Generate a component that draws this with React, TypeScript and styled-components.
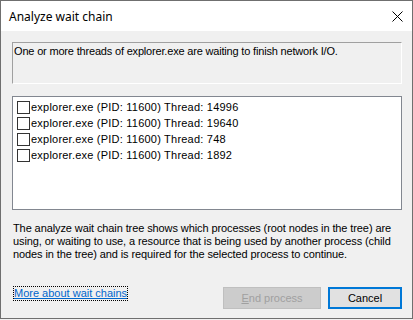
import React from "react";
import styled, { createGlobalStyle } from "styled-components";

const Global = createGlobalStyle`
  html, body { margin: 0; padding: 0; background: #f0f0f0; }
  body { font-family: "Liberation Sans", Arial, sans-serif; }
`;

const Window = styled.div`
  box-sizing: border-box;
  width: 413px;
  height: 319px;
  border: 1px solid #6f6f6f;
  background: #f0f0f0;
  display: flex;
  flex-direction: column;
`;

const TitleBar = styled.div`
  height: 30px;
  background: #ffffff;
  display: flex;
  align-items: center;
  justify-content: space-between;
  padding: 0 0 0 8px;
  flex-shrink: 0;
`;

const Title = styled.div`
  font-family: "Noto Sans", "Open Sans", sans-serif;
  font-size: 12px;
  color: #000;
  margin-top: 1px;
`;

const CloseBtn = styled.div`
  width: 30px;
  height: 30px;
  display: flex;
  align-items: center;
  justify-content: center;
`;

const Body = styled.div`
  flex: 1;
  display: flex;
  flex-direction: column;
  padding: 11px 10px 0 11px;
  font-size: 11px;
  color: #000;
`;

const Message = styled.div`
  box-sizing: border-box;
  height: 42px;
  border-top: 1px solid #a0a0a0;
  border-left: 1px solid #a0a0a0;
  border-right: 1px solid #ffffff;
  border-bottom: 1px solid #ffffff;
  padding: 2px 0 0 1px;
  line-height: 13px;
  letter-spacing: -0.18px;
`;

const List = styled.div`
  box-sizing: border-box;
  margin-top: 12px;
  height: 114px;
  background: #fff;
  border: 1px solid #828790;
  padding: 2px 0 0 4px;
  display: flex;
  flex-direction: column;
`;

const Row = styled.div`
  height: 16px;
  display: flex;
  align-items: center;
  letter-spacing: 0.22px;
`;

const Box = styled.span`
  box-sizing: border-box;
  width: 13px;
  height: 13px;
  border: 1px solid #333333;
  background: #fff;
  margin-right: 1px;
  flex-shrink: 0;
`;

const Description = styled.div`
  margin-top: 12px;
  line-height: 13px;
  padding-left: 1px;
  letter-spacing: -0.1px;
`;

const Footer = styled.div`
  margin-top: 26px;
  display: flex;
  align-items: flex-start;
`;

const Link = styled.a`
  color: #0066cc;
  text-decoration: underline;
  outline: 1px dotted #000;
  outline-offset: 0px;
  line-height: 13px;
  margin: 0 0 0 2px;
  cursor: pointer;
`;

const Spacer = styled.div`
  flex: 1;
`;

const Button = styled.button<{ $primary?: boolean; $w: number }>`
  box-sizing: border-box;
  width: ${(p) => p.$w}px;
  height: 22px;
  font-family: "Liberation Sans", Arial, sans-serif;
  font-size: 11px;
  padding: 0;
  margin-left: ${(p) => (p.$primary ? 7 : 0)}px;
  background: ${(p) => (p.$primary ? "#e1e1e1" : "#cccccc")};
  color: ${(p) => (p.$primary ? "#000" : "#a0a0a0")};
  border: ${(p) => (p.$primary ? "2px solid #0078d7" : "1px solid #bfbfbf")};
`;

const U = styled.span`
  text-decoration: underline;
`;

const rows = ["14996", "19640", "748", "1892"];

export default function App() {
  return (
    <>
      <Global />
      <Window>
        <TitleBar>
          <Title>Analyze wait chain</Title>
          <CloseBtn>
            <svg width="11" height="11" viewBox="0 0 11 11">
              <path d="M0.5 0.5 L10.5 10.5 M10.5 0.5 L0.5 10.5" stroke="#000" strokeWidth="1" />
            </svg>
          </CloseBtn>
        </TitleBar>
        <Body>
          <Message>One or more threads of explorer.exe are waiting to finish network I/O.</Message>
          <List>
            {rows.map((t) => (
              <Row key={t}>
                <Box />
                explorer.exe (PID: 11600) Thread: {t}
              </Row>
            ))}
          </List>
          <Description>
            The analyze wait chain tree shows which processes (root nodes in the tree) are
            using, or waiting to use, a resource that is being used by another process (child
            nodes in the tree) and is required for the selected process to continue.
          </Description>
          <Footer>
            <Link>More about wait chains</Link>
            <Spacer />
            <Button $w={98} disabled>
              <U>E</U>nd process
            </Button>
            <Button $w={74} $primary>
              Cancel
            </Button>
          </Footer>
        </Body>
      </Window>
    </>
  );
}
